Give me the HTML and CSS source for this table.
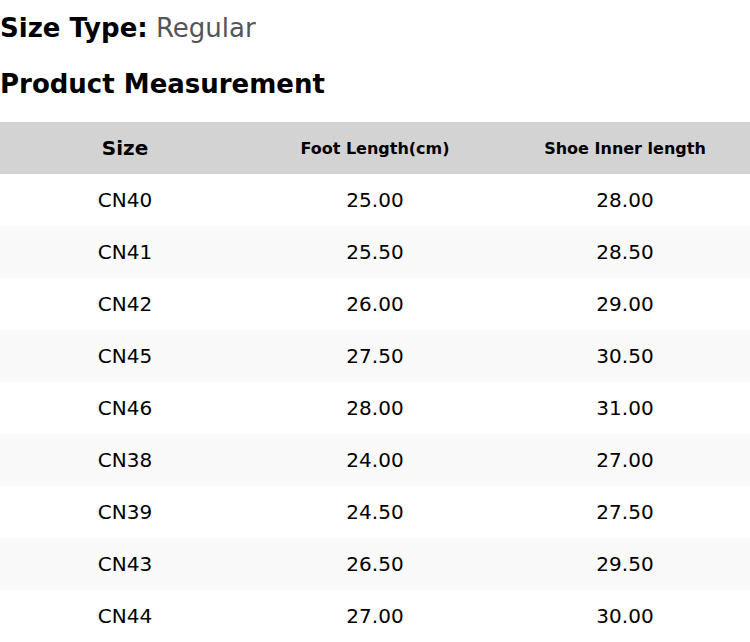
FILE: index.html
```html
<!DOCTYPE html>
<html>
<head>
<meta charset="utf-8">
<link rel="stylesheet" href="styles.css">
</head>
<body>
<div class="page">
  <div class="size-type"><span class="label">Size Type:</span> <span class="value">Regular</span></div>
  <div class="title">Product Measurement</div>
  <div class="table">
    <div class="row head">
      <div class="cell big">Size</div>
      <div class="cell">Foot Length(cm)</div>
      <div class="cell">Shoe Inner length</div>
    </div>
    <div class="row"><div class="cell">CN40</div><div class="cell">25.00</div><div class="cell">28.00</div></div>
    <div class="row alt"><div class="cell">CN41</div><div class="cell">25.50</div><div class="cell">28.50</div></div>
    <div class="row"><div class="cell">CN42</div><div class="cell">26.00</div><div class="cell">29.00</div></div>
    <div class="row alt"><div class="cell">CN45</div><div class="cell">27.50</div><div class="cell">30.50</div></div>
    <div class="row"><div class="cell">CN46</div><div class="cell">28.00</div><div class="cell">31.00</div></div>
    <div class="row alt"><div class="cell">CN38</div><div class="cell">24.00</div><div class="cell">27.00</div></div>
    <div class="row"><div class="cell">CN39</div><div class="cell">24.50</div><div class="cell">27.50</div></div>
    <div class="row alt"><div class="cell">CN43</div><div class="cell">26.50</div><div class="cell">29.50</div></div>
    <div class="row"><div class="cell">CN44</div><div class="cell">27.00</div><div class="cell">30.00</div></div>
  </div>
</div>
</body>
</html>
```
FILE: styles.css
```css
html, body {
  margin: 0;
  padding: 0;
  background: #ffffff;
}
.page {
  font-family: "DejaVu Sans", sans-serif;
  color: #000;
  width: 750px;
  padding-top: 13px;
}
.size-type {
  font-size: 26px;
  line-height: 30px;
}
.size-type .label {
  font-weight: bold;
}
.size-type .value {
  color: #555555;
}
.title {
  margin-top: 26px;
  font-size: 26px;
  line-height: 30px;
  font-weight: bold;
}
.table {
  margin-top: 23px;
}
.row {
  display: grid;
  grid-template-columns: 1fr 1fr 1fr;
  height: 52px;
  align-items: center;
  font-size: 20px;
}
.row.alt {
  background: #f9f9f9;
}
.row.head {
  background: #d3d3d3;
  font-weight: bold;
  font-size: 16px;
}
.row.head .big {
  font-size: 20px;
}
.cell {
  text-align: center;
}
```
